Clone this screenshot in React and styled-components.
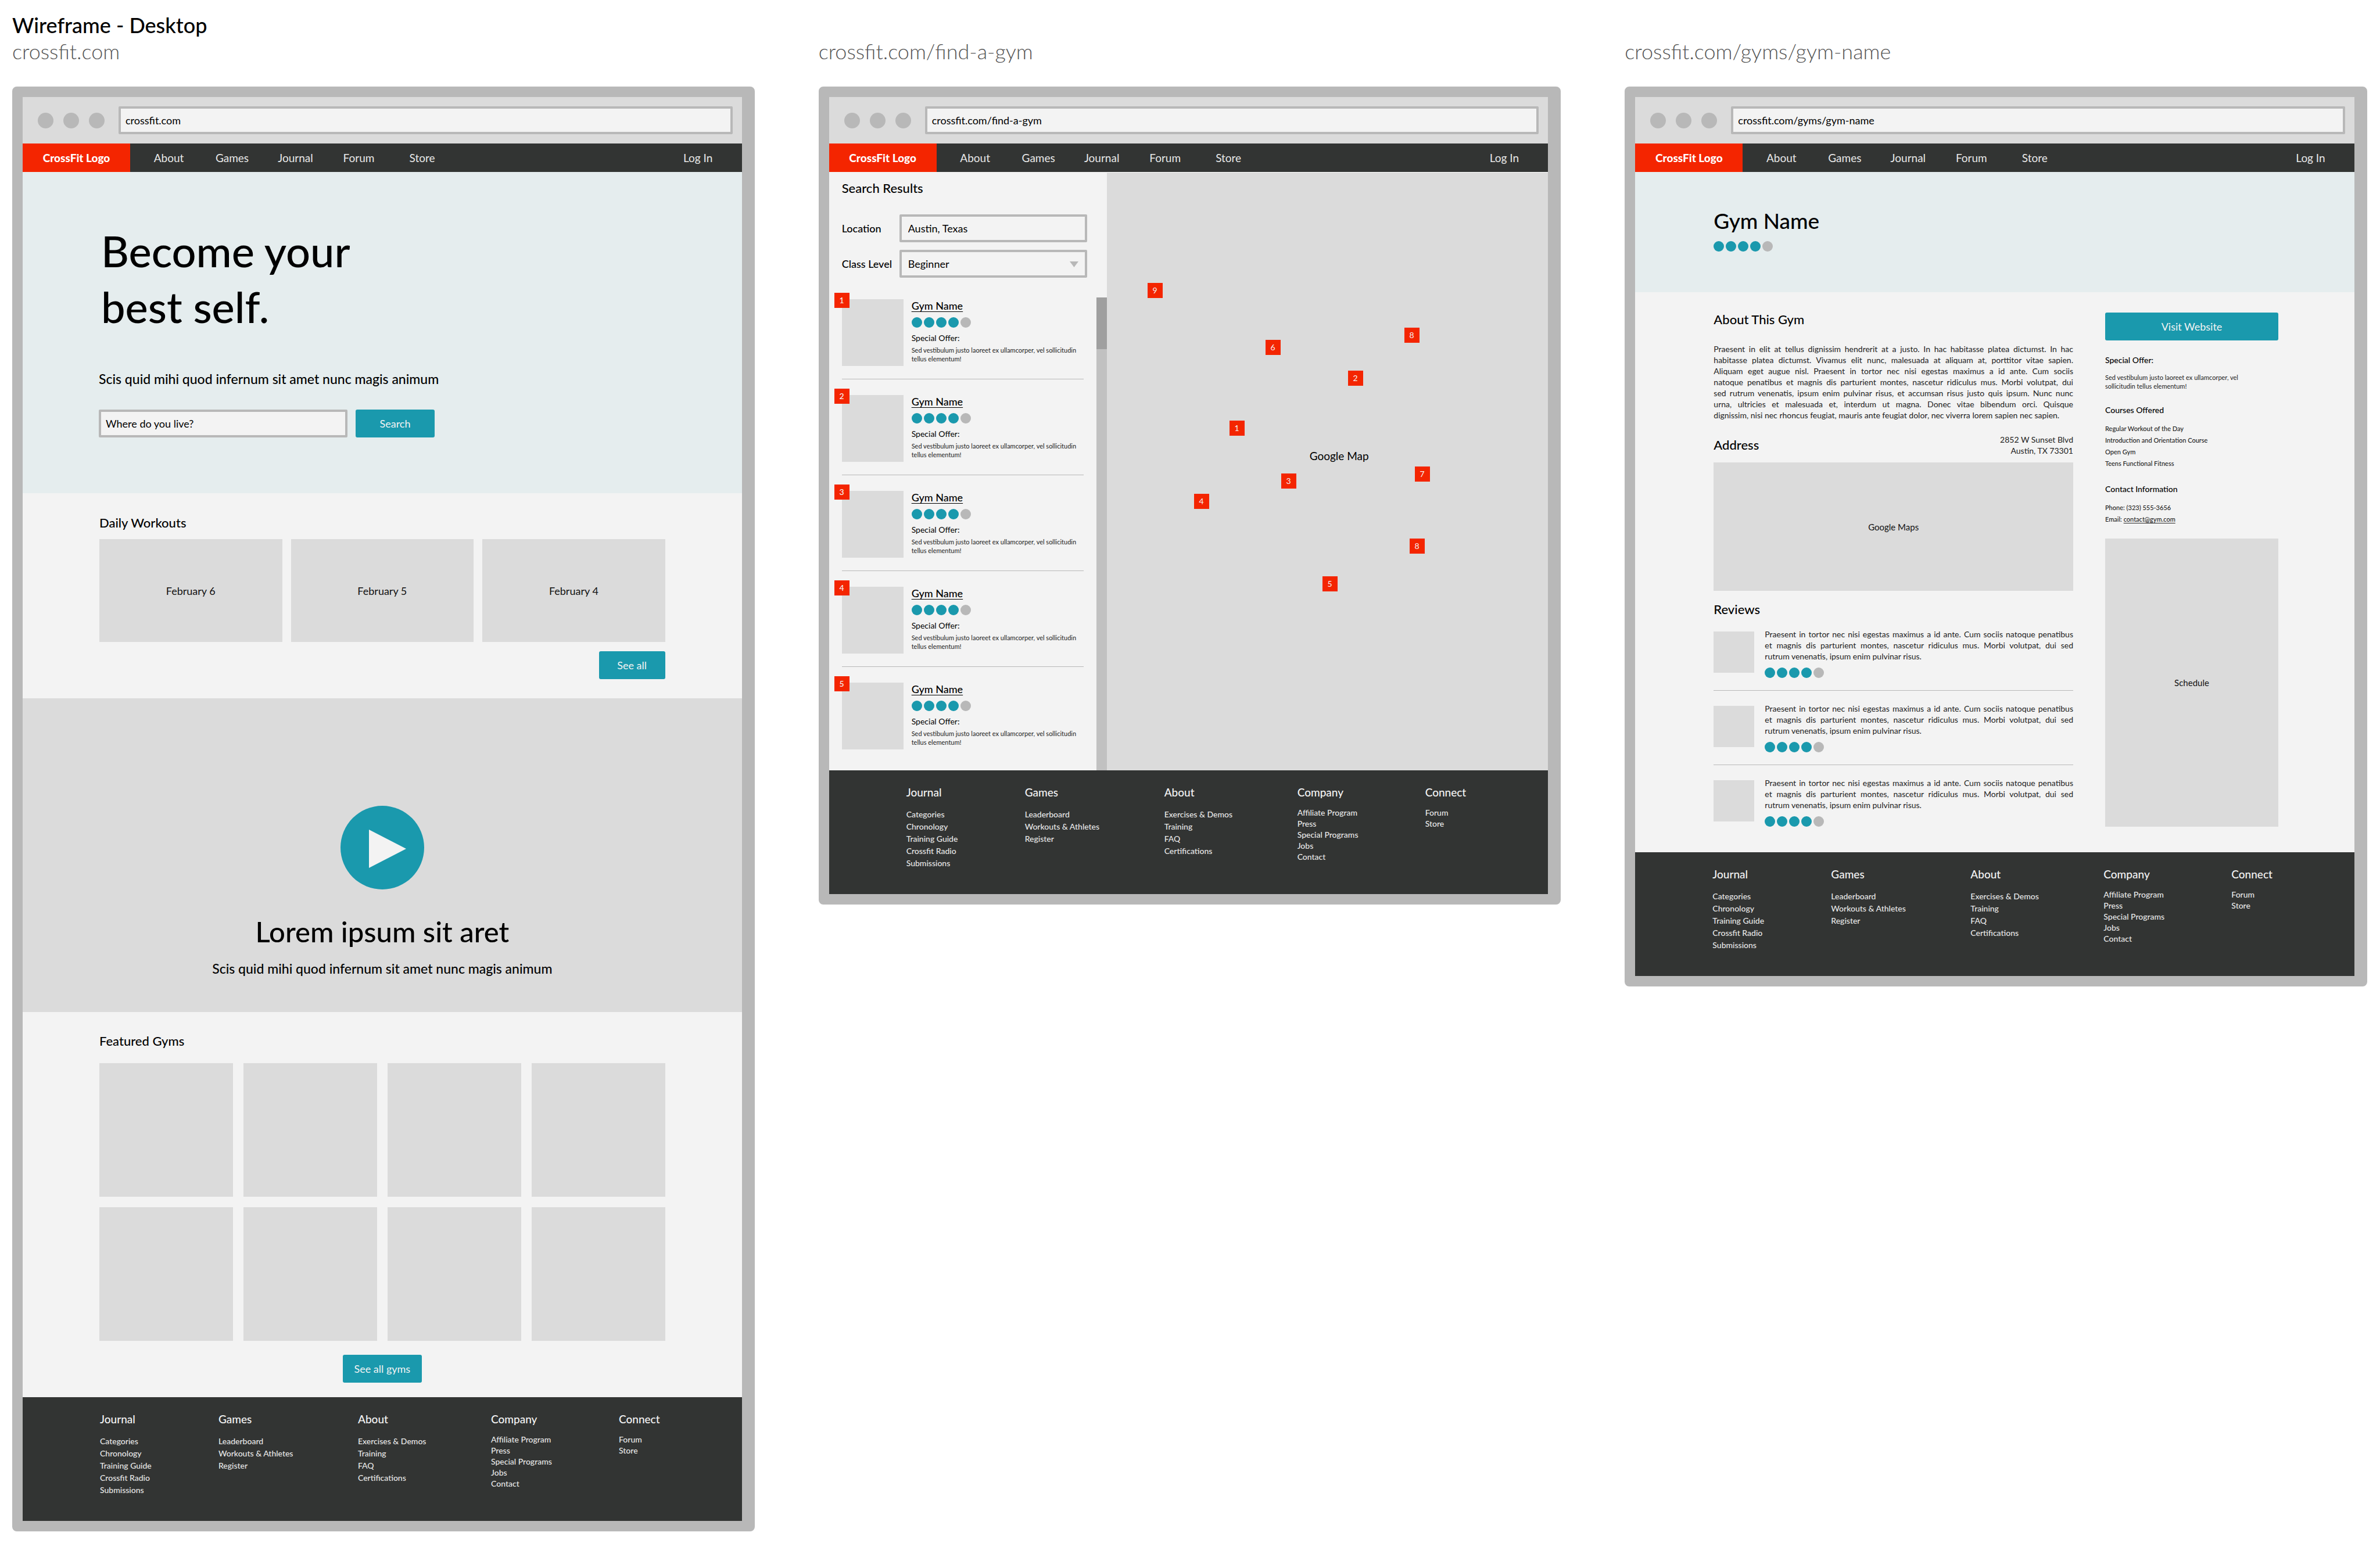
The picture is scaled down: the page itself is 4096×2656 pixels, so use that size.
import React, { useId } from "react";
import styled, { createGlobalStyle, ThemeProvider } from "styled-components";

const theme = {
  frame: "#b8b8b8",
  box: "#dbdbdb",
  surface: "#f3f3f3",
  dark: "#323433",
  red: "#f42500",
  teal: "#1a99ad",
  hero: "#e5edee",
};

const GlobalStyle = createGlobalStyle`
  *, *::before, *::after { box-sizing: border-box; }
  body {
    margin: 0;
    background: #fff;
    color: #000;
    font-family: "Lato", "Liberation Sans", sans-serif;
    font-size: 18px;
    line-height: 24px;
  }
  h1, h2, h3, h4, p, ul { margin: 0; padding: 0; font-weight: 500; }
  p { font-weight: 400; }
  ul { list-style: none; }
  a { color: inherit; text-decoration: none; }
  input, select, button { font: inherit; color: inherit; margin: 0; }
`;

/* ---------- Board ---------- */

const Board = styled.div`
  padding: 20px 22px 20px 21px;
`;

const BoardTitle = styled.h1`
  font-size: 36px;
  line-height: 46px;
`;

const Screens = styled.div`
  display: grid;
  grid-template-columns: repeat(3, minmax(0, 1fr));
  column-gap: 110px;
  align-items: start;
`;

const ScreenLabel = styled.h2`
  margin-bottom: 39px;
  color: #555;
  font-size: 36px;
  line-height: 44px;
  font-weight: 300;
`;

/* ---------- Browser window ---------- */

const Frame = styled.div`
  border: solid ${(p) => p.theme.frame};
  border-width: 18px 22px 18px 18px;
  border-radius: 8px;
  background: ${(p) => p.theme.surface};
`;

const Chrome = styled.div`
  display: flex;
  align-items: center;
  height: 80px;
  padding: 0 16px 0 26px;
  background: ${(p) => p.theme.box};
`;

const Lights = styled.div`
  display: flex;
  gap: 17px;
  margin-right: 24px;
`;

const Light = styled.span`
  width: 27px;
  height: 27px;
  border-radius: 50%;
  background: ${(p) => p.theme.frame};
`;

const Field = styled.input`
  flex: 1;
  min-width: 0;
  height: 48px;
  padding: 0 ${(p) => p.$inset || 8}px;
  border: 4px solid ${(p) => p.theme.frame};
  border-radius: 2px;
  background: ${(p) => p.theme.surface};
  outline: none;
  &::placeholder { color: #000; opacity: 1; }
`;

const Nav = styled.nav`
  display: flex;
  align-items: center;
  height: 49px;
  padding-right: 21px;
  background: ${(p) => p.theme.dark};
  color: #e8e8e8;
  font-size: 19px;
`;

const Logo = styled.a`
  width: 185px;
  margin-right: 12px;
  background: ${(p) => p.theme.red};
  color: #fff;
  line-height: 49px;
  font-weight: 900;
  text-align: center;
`;

const NavLink = styled.a`
  width: 109px;
  text-align: center;
  ${(p) => p.$end && "margin-left: auto;"}
`;

const Footer = styled.footer`
  display: grid;
  grid-template-columns: 204px 240px 229px 220px auto;
  justify-content: start;
  padding: 26px 0 43px 133px;
  background: ${(p) => p.theme.dark};
  color: #f3f3f3;
`;

const FooterTitle = styled.h3`
  font-size: 19px;
  line-height: 24px;
`;

const FooterList = styled.ul`
  margin-top: ${(p) => (p.$tight ? 13 : 15)}px;
  color: #e8e8e8;
  font-size: 14px;
  line-height: ${(p) => (p.$tight ? 19 : 21)}px;
`;

/* ---------- Shared parts ---------- */

const Button = styled.button`
  flex: none;
  width: ${(p) => (p.$width ? `${p.$width}px` : "100%")};
  height: 48px;
  padding: 0;
  border: 0;
  border-radius: 3px;
  background: ${(p) => p.theme.teal};
  color: #f3f3f3;
`;

const Placeholder = styled.div`
  display: flex;
  align-items: center;
  justify-content: center;
  flex: ${(p) => p.$flex || "none"};
  height: ${(p) => (p.$height ? `${p.$height}px` : "auto")};
  background: ${(p) => p.theme.box};
  color: #111;
  font-size: ${(p) => p.$text || 18}px;
`;

const Title = styled.h3`
  font-size: 22px;
  line-height: ${(p) => p.$line || 28}px;
`;

const Tagline = styled.p`
  font-size: 23px;
  line-height: 28px;
  font-weight: 500;
`;

const Dots = styled.div`
  display: flex;
  gap: 3px;
`;

const Dot = styled.span`
  width: 18px;
  height: 18px;
  border-radius: 50%;
  background: ${(p) => (p.$on ? p.theme.teal : p.theme.frame)};
`;

const SmallText = styled.p`
  font-size: 11px;
  line-height: 15px;
  color: #222;
`;

/* ---------- Home ---------- */

const Hero = styled.section`
  padding: ${(p) => p.$pad};
  background: ${(p) => p.theme.hero};
`;

const HeroTitle = styled.h2`
  margin-left: 4px;
  font-size: 74px;
  line-height: 96px;
`;

const HeroTagline = styled(Tagline)`
  margin: 62px 0 39px;
`;

const SearchForm = styled.form`
  display: flex;
  gap: 14px;
  width: 578px;
`;

const Section = styled.section`
  padding: ${(p) => p.$pad};
`;

const Days = styled.div`
  display: grid;
  grid-template-columns: repeat(3, 1fr);
  gap: 15px;
  margin: 14px 0 16px;
`;

const Gyms = styled.div`
  display: grid;
  grid-template-columns: repeat(4, 1fr);
  gap: 18px;
  margin: 24px 0;
`;

const Actions = styled.div`
  display: flex;
  justify-content: ${(p) => p.$align};
`;

const Video = styled.section`
  display: flex;
  flex-direction: column;
  align-items: center;
  padding: 185px 0 61px;
  background: ${(p) => p.theme.box};
`;

const PlayButton = styled.button`
  width: 144px;
  height: 144px;
  padding: 0;
  border: 0;
  border-radius: 50%;
  background: ${(p) => p.theme.teal};
  svg { display: block; }
`;

const VideoTitle = styled.h2`
  margin: 44px 0 22px;
  font-size: 49px;
  line-height: 56px;
`;

/* ---------- Search ---------- */

const SearchLayout = styled.main`
  display: flex;
`;

const Results = styled.section`
  display: flex;
  flex-direction: column;
  flex: none;
  width: 478px;
  padding-top: 14px;
`;

const Filters = styled.form`
  display: grid;
  gap: 13px;
  padding: 0 34px 0 22px;
`;

const ResultsTitle = styled(Title)`
  margin-bottom: 18px;
`;

const FilterRow = styled.div`
  display: grid;
  grid-template-columns: 99px minmax(0, 1fr);
  align-items: center;
  label { font-weight: 500; }
`;

const SelectWrap = styled.div`
  position: relative;
  display: flex;
  svg {
    position: absolute;
    right: 15px;
    top: 20px;
    pointer-events: none;
  }
`;

const Select = styled(Field)`
  appearance: none;
`;

const Scroller = styled.div`
  display: flex;
  flex: 1;
  justify-content: space-between;
  margin-top: 34px;
`;

const ResultList = styled.ul`
  flex: 1;
  padding: 3px 22px 36px 22px;
`;

const Scrollbar = styled.div`
  width: 18px;
  background: #c1c1c1;
`;

const Thumb = styled.div`
  height: 89px;
  background: #9f9f9f;
`;

const Result = styled.li`
  display: flex;
  gap: 14px;
  & + & { margin-top: 27px; }
  &:not(:last-child) {
    padding-bottom: 22px;
    border-bottom: 1px solid ${(p) => p.theme.frame};
  }
`;

const Photo = styled.div`
  position: relative;
  flex: none;
  width: 106px;
  height: 115px;
  background: ${(p) => p.theme.box};
`;

const Pin = styled.span`
  position: absolute;
  left: ${(p) => p.$x}px;
  top: ${(p) => p.$y}px;
  width: 26px;
  height: 26px;
  background: ${(p) => p.theme.red};
  color: #f3f3f3;
  font-size: 14px;
  line-height: 26px;
  text-align: center;
`;

const ResultName = styled.a`
  display: block;
  margin-bottom: 9px;
  line-height: 22px;
  font-weight: 500;
  text-decoration: underline;
  text-decoration-thickness: 1px;
  text-underline-offset: 3px;
`;

const OfferLabel = styled.p`
  margin: 8px 0 3px;
  font-size: 14px;
  line-height: 20px;
`;

const Map = styled.section`
  position: relative;
  flex: 1;
  border-top: 1px solid #fff;
  background: ${(p) => p.theme.box};
`;

const MapLabel = styled.span`
  position: absolute;
  left: 349px;
  top: 476px;
  font-size: 19px;
`;

/* ---------- Gym ---------- */

const GymTitle = styled.h2`
  margin-bottom: 11px;
  font-size: 37px;
  line-height: 48px;
`;

const GymLayout = styled.main`
  display: grid;
  grid-template-columns: minmax(0, 1fr) 298px;
  column-gap: 55px;
  padding: 35px 131px 44px 135px;
`;

const Copy = styled.p`
  font-size: 14px;
  line-height: 19px;
  color: #222;
`;

const Line = styled.span`
  display: block;
  text-align-last: justify;
  &:last-child { text-align-last: left; }
`;

const About = styled.section`
  display: grid;
  gap: 29px;
`;

const AddressRow = styled.div`
  display: flex;
  align-items: center;
  justify-content: space-between;
  margin: 23px 0 11px;
  ${Copy} { text-align: right; }
`;

const ReviewsTitle = styled(Title)`
  margin: 20px 0 21px;
`;

const Review = styled.article`
  display: flex;
  gap: 18px;
  & + & { margin-top: 21px; }
  &:not(:last-child) {
    padding-bottom: 21px;
    border-bottom: 1px solid ${(p) => p.theme.frame};
  }
`;

const Avatar = styled.div`
  flex: none;
  width: 70px;
  height: 71px;
  margin-top: 5px;
  background: ${(p) => p.theme.box};
`;

const ReviewBody = styled.div`
  display: grid;
  flex: 1;
  gap: 10px;
`;

const Aside = styled.aside`
  display: flex;
  flex-direction: column;
`;

const AsideTitle = styled.h4`
  margin: 24px 0 12px;
  font-size: 14px;
  line-height: 20px;
`;

const AsideList = styled.ul`
  font-size: 11px;
  line-height: 20px;
  color: #222;
  a { text-decoration: underline; text-underline-offset: 2px; }
`;

const Schedule = styled(Placeholder)`
  margin-top: 23px;
`;

/* ---------- Data ---------- */

const NAV = ["About", "Games", "Journal", "Forum", "Store"];

const FOOTER = [
  { title: "Journal", links: ["Categories", "Chronology", "Training Guide", "Crossfit Radio", "Submissions"] },
  { title: "Games", links: ["Leaderboard", "Workouts & Athletes", "Register"] },
  { title: "About", links: ["Exercises & Demos", "Training", "FAQ", "Certifications"] },
  { title: "Company", tight: true, links: ["Affiliate Program", "Press", "Special Programs", "Jobs", "Contact"] },
  { title: "Connect", tight: true, links: ["Forum", "Store"] },
];

const PINS = [
  { n: 9, x: 70, y: 190 },
  { n: 6, x: 273, y: 288 },
  { n: 8, x: 512, y: 267 },
  { n: 2, x: 415, y: 341 },
  { n: 1, x: 211, y: 427 },
  { n: 3, x: 300, y: 518 },
  { n: 7, x: 530, y: 506 },
  { n: 4, x: 150, y: 553 },
  { n: 8, x: 521, y: 630 },
  { n: 5, x: 371, y: 695 },
];

const ABOUT = [
  "Praesent in elit at tellus dignissim hendrerit at a justo. In hac habitasse platea dictumst. In hac",
  "habitasse platea dictumst. Vivamus elit nunc, malesuada at aliquam at, porttitor vitae sapien.",
  "Aliquam eget augue nisl. Praesent in tortor nec nisi egestas maximus a id ante. Cum sociis",
  "natoque penatibus et magnis dis parturient montes, nascetur ridiculus mus. Morbi volutpat, dui",
  "sed rutrum venenatis, ipsum enim pulvinar risus, et accumsan risus justo quis ipsum. Nunc nunc",
  "urna, ultricies et malesuada et, interdum ut magna. Donec vitae bibendum orci. Quisque",
  "dignissim, nisi nec rhoncus feugiat, mauris ante feugiat dolor, nec viverra lorem sapien nec sapien.",
];

const REVIEW = [
  "Praesent in tortor nec nisi egestas maximus a id ante. Cum sociis natoque penatibus",
  "et magnis dis parturient montes, nascetur ridiculus mus. Morbi volutpat, dui sed",
  "rutrum venenatis, ipsum enim pulvinar risus.",
];

/* ---------- Components ---------- */

const Rating = ({ value = 4 }) => (
  <Dots role="img" aria-label={`${value} out of 5`}>
    {[1, 2, 3, 4, 5].map((n) => (
      <Dot key={n} $on={n <= value} />
    ))}
  </Dots>
);

const Justified = ({ lines }) => (
  <Copy>
    {lines.map((line) => (
      <Line key={line}>{line}</Line>
    ))}
  </Copy>
);

function Browser({ url, children }) {
  return (
    <section>
      <ScreenLabel>{url}</ScreenLabel>
      <Frame>
        <Chrome>
          <Lights>
            <Light />
            <Light />
            <Light />
          </Lights>
          <Field aria-label="Address bar" defaultValue={url} />
        </Chrome>
        <Nav>
          <Logo href="#">CrossFit Logo</Logo>
          {NAV.map((item) => (
            <NavLink key={item} href="#">{item}</NavLink>
          ))}
          <NavLink href="#" $end>Log In</NavLink>
        </Nav>
        {children}
        <Footer>
          {FOOTER.map((col) => (
            <div key={col.title}>
              <FooterTitle>{col.title}</FooterTitle>
              <FooterList $tight={col.tight}>
                {col.links.map((link) => (
                  <li key={link}><a href="#">{link}</a></li>
                ))}
              </FooterList>
            </div>
          ))}
        </Footer>
      </Frame>
    </section>
  );
}

function Home() {
  return (
    <Browser url="crossfit.com">
      <Hero $pad="88px 132px 96px 131px">
        <HeroTitle>Become your<br />best self.</HeroTitle>
        <HeroTagline>Scis quid mihi quod infernum sit amet nunc magis animum</HeroTagline>
        <SearchForm>
          <Field aria-label="Where do you live?" placeholder="Where do you live?" />
          <Button type="button" $width={136}>Search</Button>
        </SearchForm>
      </Hero>
      <Section $pad="37px 132px 33px">
        <Title>Daily Workouts</Title>
        <Days>
          {["February 6", "February 5", "February 4"].map((day) => (
            <Placeholder key={day} $height={177}>{day}</Placeholder>
          ))}
        </Days>
        <Actions $align="flex-end">
          <Button $width={114}>See all</Button>
        </Actions>
      </Section>
      <Video>
        <PlayButton aria-label="Play">
          <svg width="144" height="144" viewBox="0 0 144 144">
            <path d="M49 41 113 74 49 107Z" fill="#f3f3f3" />
          </svg>
        </PlayButton>
        <VideoTitle>Lorem ipsum sit aret</VideoTitle>
        <Tagline>Scis quid mihi quod infernum sit amet nunc magis animum</Tagline>
      </Video>
      <Section $pad="36px 132px 25px">
        <Title>Featured Gyms</Title>
        <Gyms>
          {Array.from({ length: 8 }, (_, i) => (
            <Placeholder key={i} $height={230} />
          ))}
        </Gyms>
        <Actions $align="center">
          <Button $width={136}>See all gyms</Button>
        </Actions>
      </Section>
    </Browser>
  );
}

function FindAGym() {
  const id = useId();
  return (
    <Browser url="crossfit.com/find-a-gym">
      <SearchLayout>
        <Results>
          <Filters>
            <ResultsTitle>Search Results</ResultsTitle>
            <FilterRow>
              <label htmlFor={`${id}-loc`}>Location</label>
              <Field id={`${id}-loc`} $inset={11} defaultValue="Austin, Texas" />
            </FilterRow>
            <FilterRow>
              <label htmlFor={`${id}-level`}>Class Level</label>
              <SelectWrap>
                <Select as="select" id={`${id}-level`} $inset={11} defaultValue="Beginner">
                  <option>Beginner</option>
                </Select>
                <svg width="15" height="10" viewBox="0 0 15 10">
                  <path d="M0 0H15L7.5 10Z" fill="#b8b8b8" />
                </svg>
              </SelectWrap>
            </FilterRow>
          </Filters>
          <Scroller>
            <ResultList>
              {[1, 2, 3, 4, 5].map((n) => (
                <Result key={n}>
                  <Photo>
                    <Pin $x={-13} $y={-11}>{n}</Pin>
                  </Photo>
                  <div>
                    <ResultName href="#">Gym Name</ResultName>
                    <Rating />
                    <OfferLabel>Special Offer:</OfferLabel>
                    <SmallText>
                      Sed vestibulum justo laoreet ex ullamcorper, vel sollicitudin
                      <br />
                      tellus elementum!
                    </SmallText>
                  </div>
                </Result>
              ))}
            </ResultList>
            <Scrollbar>
              <Thumb />
            </Scrollbar>
          </Scroller>
        </Results>
        <Map aria-label="Map">
          {PINS.map((pin, i) => (
            <Pin key={i} $x={pin.x} $y={pin.y}>{pin.n}</Pin>
          ))}
          <MapLabel>Google Map</MapLabel>
        </Map>
      </SearchLayout>
    </Browser>
  );
}

function Gym() {
  return (
    <Browser url="crossfit.com/gyms/gym-name">
      <Hero $pad="60px 131px 70px 135px">
        <GymTitle>Gym Name</GymTitle>
        <Rating />
      </Hero>
      <GymLayout>
        <div>
          <About>
            <Title $line={24}>About This Gym</Title>
            <Justified lines={ABOUT} />
          </About>
          <AddressRow>
            <Title $line={24}>Address</Title>
            <Copy>2852 W Sunset Blvd<br />Austin, TX 73301</Copy>
          </AddressRow>
          <Placeholder $height={221} $text={15}>Google Maps</Placeholder>
          <ReviewsTitle $line={24}>Reviews</ReviewsTitle>
          <div>
            {[1, 2, 3].map((n) => (
              <Review key={n}>
                <Avatar />
                <ReviewBody>
                  <Justified lines={REVIEW} />
                  <Rating />
                </ReviewBody>
              </Review>
            ))}
          </div>
        </div>
        <Aside>
          <Button>Visit Website</Button>
          <AsideTitle>Special Offer:</AsideTitle>
          <SmallText>
            Sed vestibulum justo laoreet ex ullamcorper, vel
            <br />
            sollicitudin tellus elementum!
          </SmallText>
          <AsideTitle>Courses Offered</AsideTitle>
          <AsideList>
            <li>Regular Workout of the Day</li>
            <li>Introduction and Orientation Course</li>
            <li>Open Gym</li>
            <li>Teens Functional Fitness</li>
          </AsideList>
          <AsideTitle>Contact Information</AsideTitle>
          <AsideList>
            <li>Phone: (323) 555-3656</li>
            <li>Email: <a href="mailto:contact@gym.com">contact@gym.com</a></li>
          </AsideList>
          <Schedule $flex="1" $text={15}>Schedule</Schedule>
        </Aside>
      </GymLayout>
    </Browser>
  );
}

export default function App() {
  return (
    <ThemeProvider theme={theme}>
      <GlobalStyle />
      <Board>
        <BoardTitle>Wireframe - Desktop</BoardTitle>
        <Screens>
          <Home />
          <FindAGym />
          <Gym />
        </Screens>
      </Board>
    </ThemeProvider>
  );
}
